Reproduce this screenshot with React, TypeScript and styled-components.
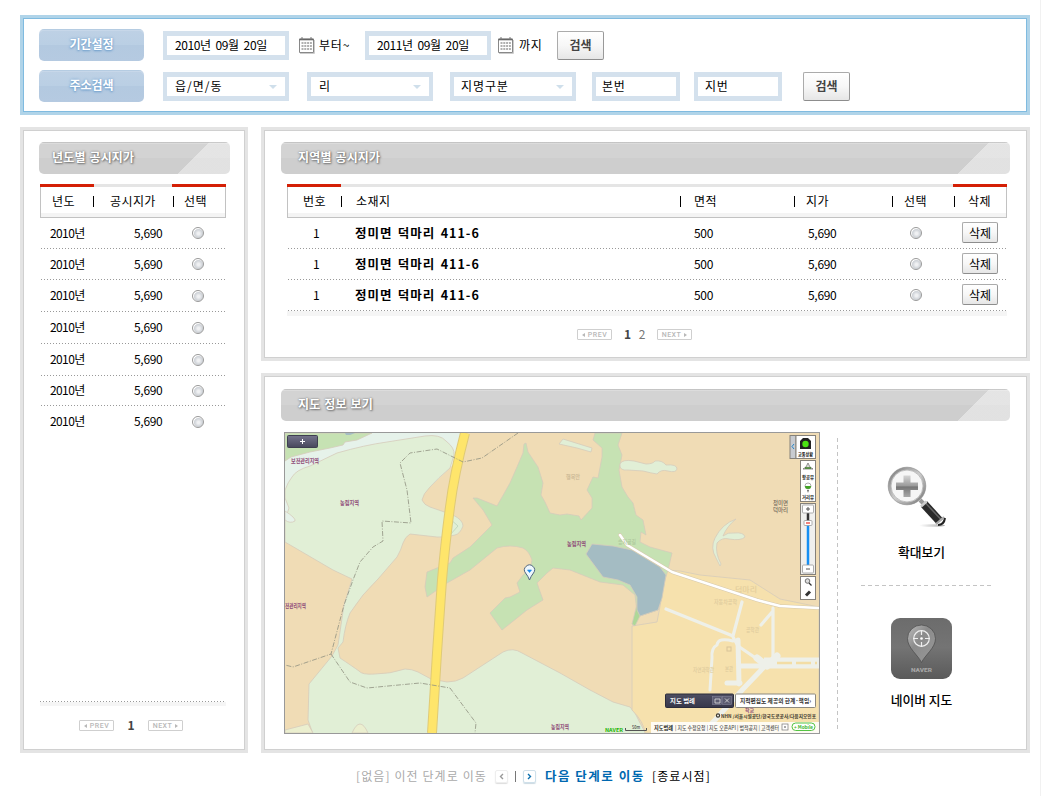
import React from 'react';
import styled, { createGlobalStyle, css } from 'styled-components';

const Global = createGlobalStyle`
  * { box-sizing: border-box; }
  html, body { margin: 0; padding: 0; background: #fff; overflow: hidden; }
  body { font: 12px/16px "Noto Sans CJK KR", sans-serif; color: #000; }
  button, input { font: inherit; color: inherit; }
`;

const Page = styled.main`
  width: 1041px;
  height: 796px;
  padding: 15px 10px 0 20px;
  border-right: 1px solid #f1f1f1;
  display: flex;
  flex-direction: column;
`;

const Text = styled.span<{ $ls?: number; $ws?: number; $bold?: boolean; $size?: number; $color?: string }>`
  white-space: nowrap;
  line-height: 16px;
  letter-spacing: ${p => p.$ls ?? 0}px;
  word-spacing: ${p => p.$ws ?? 0}px;
  font-weight: ${p => (p.$bold ? 700 : 400)};
  font-size: ${p => p.$size ?? 12}px;
  color: ${p => p.$color ?? '#000'};
`;

const SearchPanel = styled.section`
  width: 1010px;
  height: 100px;
  border: 3px solid #b0d4e9;
  box-shadow: inset 0 0 0 1px #80bbe0;
  padding: 11px 16px;
  display: flex;
  flex-direction: column;
  gap: 9px;
`;

const SearchRow = styled.div`
  display: flex;
  align-items: center;
  height: 32px;
`;

const SearchTag = styled.div`
  width: 105px;
  height: 32px;
  margin-right: 19px;
  border-radius: 5px;
  background: linear-gradient(#a9c4dd 0 1px, #bed1e5 1px, #bacfe4 50%, #b3c9e0 51%, #b5cae1);
  box-shadow: inset 0 2px 0 rgba(255, 255, 255, 0.15);
  color: #fff;
  font-weight: 700;
  line-height: 30px;
  text-align: center;
  text-shadow: 0 0 3px #6f9fcc, 0 1px 2px #6f9fcc;
`;

const Field = styled.div<{ $w?: number; $gap?: number; $pad?: number }>`
  width: ${p => p.$w ?? 126}px;
  height: 29px;
  margin-right: ${p => p.$gap ?? 0}px;
  padding: 0 8px 0 ${p => p.$pad ?? 8}px;
  border: solid #d4e1ed;
  border-width: 5px 4px;
  display: flex;
  align-items: center;
  justify-content: space-between;
`;

const SelectArrow = styled.i`
  border: 4px solid transparent;
  border-top-color: #cfdfeb;
  border-bottom: 0;
  margin-top: 1px;
`;

const buttonFace = css`
  border: 1px solid #ababab;
  border-bottom-color: #8d8d8d;
  border-right-color: #999;
  border-radius: 2px;
  background: linear-gradient(#fff, #f7f7f7 50%, #e6e6e6);
  padding: 0;
`;

const SearchButton = styled.button`
  ${buttonFace}
  width: 47px;
  height: 29px;
  color: #444;
  font-weight: 700;
  line-height: 26px;
`;

const DeleteButton = styled.button`
  ${buttonFace}
  width: 36px;
  height: 21px;
  margin-bottom: 1px;
  line-height: 17px;
`;

const Columns = styled.div`
  display: flex;
  gap: 13px;
  margin-top: 12px;
  height: 626px;
`;

const Stack = styled.div`
  display: flex;
  flex-direction: column;
  gap: 12px;
`;

const Panel = styled.section<{ $w: number; $h: number; $pad: string }>`
  width: ${p => p.$w}px;
  height: ${p => p.$h}px;
  padding: ${p => p.$pad};
  border: 3px solid #e4e4e4;
  box-shadow: inset 0 0 0 1px #d0d0d0;
  display: flex;
  flex-direction: column;
`;

const TitleBar = styled.h2<{ $w: number; $pad: number }>`
  flex: none;
  width: ${p => p.$w}px;
  height: 32px;
  margin: 0;
  padding-left: ${p => p.$pad}px;
  border-radius: 5px;
  background:
    linear-gradient(rgba(190, 190, 190, 0.7) 0 1px, rgba(255, 255, 255, 0.2) 1px 2px, transparent 2px),
    linear-gradient(135deg, transparent 0 50%, rgba(255, 255, 255, 0.4) 50.5%) right 21px top / 32px 32px no-repeat,
    linear-gradient(rgba(255, 255, 255, 0.4), rgba(255, 255, 255, 0.4)) right top / 21px 32px no-repeat,
    linear-gradient(#d3d3d3 0 50%, #cecece 50%);
  color: #fff;
  font-size: 12px;
  font-weight: 700;
  line-height: 30px;
  letter-spacing: 0.15px;
  word-spacing: 1px;
  text-shadow: 0 0 2px #666, 1px 1px 2px #777;
`;

const TableHead = styled.div<{ $cols: string }>`
  flex: none;
  display: grid;
  grid-template-columns: ${p => p.$cols};
  align-items: center;
  height: 34px;
  background:
    linear-gradient(#d41f05, #d41f05) left top / 54px 3px no-repeat,
    linear-gradient(#d41f05, #d41f05) right top / 54px 3px no-repeat,
    linear-gradient(#e5e5e5, #e5e5e5) top / 100% 3px no-repeat,
    linear-gradient(#c2c2c2, #c2c2c2) bottom / 100% 1px no-repeat,
    linear-gradient(#c2c2c2, #c2c2c2) left / 1px 100% no-repeat,
    linear-gradient(#c2c2c2, #c2c2c2) right / 1px 100% no-repeat,
    linear-gradient(#f4f4f4, #f4f4f4) left bottom 1px / 100% 4px no-repeat;
`;

const HeadCell = styled.div<{ $pad: number; $sep?: boolean }>`
  display: flex;
  align-items: center;
  gap: ${p => p.$pad}px;
  padding-left: ${p => (p.$sep ? 0 : p.$pad)}px;
  white-space: nowrap;
  letter-spacing: 0.4px;
  ${p => p.$sep && css`
    &::before { content: ''; width: 1px; height: 11px; background: #000; }
  `}
`;

const dots = 'repeating-linear-gradient(90deg, #999 0 1px, transparent 1px 3px)';

const Row = styled.div<{ $cols: string; $h: number; $last?: boolean }>`
  flex: none;
  display: grid;
  grid-template-columns: ${p => p.$cols};
  align-items: center;
  height: ${p => p.$h}px;
  padding-bottom: 1px;
  background: ${p => (p.$last ? 'none' : `${dots} left 1px bottom / calc(100% - 2px) 1px no-repeat`)};
`;

const Cell = styled.div<{ $pad?: number; $lift?: boolean }>`
  display: flex;
  align-items: center;
  padding-left: ${p => p.$pad ?? 0}px;
  padding-bottom: ${p => (p.$lift ? 1 : 0)}px;
`;

const Radio = styled.i`
  width: 12px;
  height: 12px;
  border: 1px solid #999;
  border-radius: 50%;
  background: radial-gradient(circle at 55% 55%, #f0f1f3 0 15%, #cfd3d8 50%, #d6d9dd 56%, #fff 62%);
`;

const TableFoot = styled.div`
  flex: none;
  height: 5px;
  background: #f5f5f5;
`;

const DottedFoot = styled(TableFoot)`
  background: ${dots} top / 100% 1px no-repeat, linear-gradient(#fff 0 1px, #f5f5f5 1px);
`;

const Pager = styled.nav<{ $pad: number }>`
  display: flex;
  align-items: center;
  height: 11px;
  padding-left: ${p => p.$pad}px;
`;

const PageStep = styled.button`
  width: 35px;
  height: 11px;
  padding: 1px 0 0;
  border: 1px solid #cfcfcf;
  border-radius: 1px;
  background: #fff;
  display: flex;
  align-items: center;
  justify-content: center;
  gap: 3px;
  color: #b8b8b8;
  font: 500 7px/8px Roboto, sans-serif;
  letter-spacing: 0.5px;
`;

const StepArrow = styled.i<{ $right?: boolean }>`
  margin-bottom: 1px;
  border: 2.5px solid transparent;
  ${p => (p.$right
    ? 'border-left: 3px solid #b8b8b8; border-right: 0;'
    : 'border-right: 3px solid #b8b8b8; border-left: 0;')}
`;

const PageNumber = styled.span<{ $current?: boolean; $w: number }>`
  width: ${p => p.$w}px;
  padding-bottom: 2px;
  text-align: center;
  line-height: 11px;
  font-weight: ${p => (p.$current ? 700 : 400)};
  color: ${p => (p.$current ? '#444' : '#777')};
`;

const MapBody = styled.div`
  display: flex;
  margin: 11px 0 0 3px;
`;

const MapSvg = styled.svg`
  display: block;
  width: 536px;
  height: 302px;
  text { font-family: "Noto Sans CJK KR", sans-serif; }
`;

const Tools = styled.aside`
  width: 154px;
  height: 293px;
  margin: 6px 0 0 17px;
  padding-left: 24px;
  background: repeating-linear-gradient(#c4c4c4 0 4px, transparent 4px 7px) left top / 1px 100% no-repeat;
  display: flex;
  flex-direction: column;
`;

const ToolButton = styled.button<{ $top: number; $gap: number }>`
  width: 121px;
  padding: ${p => p.$top}px 0 0;
  border: 0;
  background: none;
  display: flex;
  flex-direction: column;
  align-items: center;
  gap: ${p => p.$gap}px;
  font-size: 12.8px;
  font-weight: 500;
  line-height: 18px;
`;

const ToolDivider = styled.div`
  flex: none;
  width: 130px;
  height: 1px;
  background: repeating-linear-gradient(90deg, #c4c4c4 0 4px, transparent 4px 7px);
`;

const Footer = styled.footer`
  display: flex;
  align-items: center;
  height: 18px;
  margin: 14px 0 0 336px;
`;

const StepIcon = styled.span<{ $active?: boolean }>`
  width: 13px;
  height: 13px;
  border: 1px solid ${p => (p.$active ? '#cfe0ea' : '#eee')};
  border-radius: 2px;
  box-shadow: 0 1px 1px ${p => (p.$active ? '#cbd9e1' : '#ddd')};
  display: flex;
  align-items: center;
  justify-content: center;
`;

const FooterBar = styled.i`
  width: 1px;
  height: 11px;
  margin: 0 7px 0 7px;
  background: #777;
`;

const Calendar = () => (
  <svg width="16" height="17" viewBox="0 0 16 17" style={{ flex: 'none' }}>
    <path d="M.5 2h14v13.500H.5z" fill="#fff" stroke="#888" />
    <path d="M15.500 3v13.500H1" fill="none" stroke="#ccc" />
    <path d="M.5 2.500h14" stroke="#666" strokeWidth="1.600" />
    <path d="M3 0v3M12 0v3" stroke="#777" />
    {[5, 8, 11].map(y => (
      <path key={y} d={`M2.500 ${y + 1}h10.500`} stroke="#b0b0b0" strokeWidth="2" strokeDasharray="2 0.8" />
    ))}
  </svg>
);

const Chevron = ({ right, color }: { right?: boolean; color: string }) => (
  <svg width="5" height="7" viewBox="0 0 5 7">
    <path d={right ? 'M1 1l2.5 2.5L1 6' : 'M4 1L1.5 3.5 4 6'} fill="none" stroke={color} strokeWidth="1.4" />
  </svg>
);

const MagnifierSvg = styled.svg`
  width: 62px;
  height: 62px;
  margin-right: 7px;
`;

const Magnifier = () => (
  <MagnifierSvg viewBox="0 0 62 62">
    <defs>
      <linearGradient id="rim" x2="1" y2="1">
        <stop offset="0" stopColor="#777" /><stop offset=".5" stopColor="#ccc" /><stop offset="1" stopColor="#777" />
      </linearGradient>
      <linearGradient id="cross" x2="0" y2="1">
        <stop offset="0" stopColor="#d5d5d5" /><stop offset=".5" stopColor="#999" />
        <stop offset=".52" stopColor="#757575" /><stop offset="1" stopColor="#a8a8a8" />
      </linearGradient>
      <linearGradient id="shade"><stop offset="0" stopColor="#fff" /><stop offset="1" stopColor="#aaa" /></linearGradient>
    </defs>
    <ellipse cx="45" cy="59.500" rx="13" ry="1.300" fill="url(#shade)" />
    <path d="M33 34l5 5" stroke="#999" strokeWidth="4" />
    <path d="M37 38L53 55.500" stroke="#2a2a2a" strokeWidth="8.500" />
    <path d="M38.500 37L54.500 54" stroke="#666" strokeWidth="1.500" />
    <path d="M34 40.500l5.500-5" stroke="#ccc" strokeWidth="2.500" />
    <path d="M49 58l8-7" stroke="#aaa" strokeWidth="2" />
    <path d="M51 59q6 0 7-7" fill="none" stroke="#222" strokeWidth="2" />
    <circle cx="20" cy="20" r="17.500" fill="#f6f6f6" stroke="url(#rim)" strokeWidth="2.600" />
    <circle cx="20" cy="20" r="18.800" fill="none" stroke="#888" strokeWidth=".6" />
    <circle cx="20" cy="20" r="16" fill="none" stroke="#999" strokeWidth=".6" />
    <path d="M16.500 9.500h7v7H31v7.500h-7.500v7h-7v-7H9v-7.500h7.500z" fill="url(#cross)" />
  </MagnifierSvg>
);

const NaverIcon = () => (
  <svg width="61" height="61" viewBox="0 0 61 61">
    <defs>
      <linearGradient id="tile" x2="0" y2="1">
        <stop offset="0" stopColor="#6c6c6c" /><stop offset=".48" stopColor="#747474" /><stop offset="1" stopColor="#5a5a5a" />
      </linearGradient>
      <linearGradient id="drop" x2="1" y2="1">
        <stop offset="0" stopColor="#bdbdbd" /><stop offset=".4" stopColor="#8b8b8b" /><stop offset="1" stopColor="#999" />
      </linearGradient>
    </defs>
    <rect width="61" height="61" rx="9" fill="url(#tile)" />
    <path d="M30.500 44.500C27 37 16.500 30 16.500 20.500a14 13.500 0 0 1 28 0C44.500 30 34 37 30.500 44.500z" fill="url(#drop)" stroke="#4f4f4f" strokeWidth=".8" />
    <circle cx="30.500" cy="20.500" r="7.800" fill="none" stroke="#eee" strokeWidth="1.200" />
    <circle cx="30.500" cy="20.500" r="1.300" fill="#fff" />
    <path d="M30.500 12v5M30.500 24v5M22 20.500h5M34 20.500h5" stroke="#eee" strokeWidth="1.200" />
    <text x="20" y="54" fontSize="5.500" fontWeight="900" fontFamily="Roboto, sans-serif" fill="#a5a5a5" textLength="21" lengthAdjust="spacingAndGlyphs">NAVER</text>
  </svg>
);

type LabelProps = { x: number; y: number; w: number; s?: number; c?: string; b?: boolean; children: string };
const MapLabel = ({ x, y, w, s = 6, c = '#8e4a78', b, children }: LabelProps) => (
  <text x={x} y={y} fontSize={s} fill={c} fontWeight={b ? 700 : 500} textLength={w} lengthAdjust="spacingAndGlyphs">{children}</text>
);

const MapView = () => (
  <MapSvg viewBox="284 432 536 302">
    <defs>
      <linearGradient id="dark" x2="0" y2="1">
        <stop offset="0" stopColor="#74748c" /><stop offset="1" stopColor="#48485c" />
      </linearGradient>
      <linearGradient id="legend" x2="0" y2="1">
        <stop offset="0" stopColor="#4e4e62" /><stop offset="1" stopColor="#37374a" />
      </linearGradient>
    </defs>
    <rect x="284" y="432" width="536" height="302" fill="#f0dcb5" />
    <g stroke="#d6cbbb" strokeWidth=".8" strokeLinejoin="round">
      <path d="M285 433H461L455 463 430 487 340 500 285 542z" fill="#e6f2ea" stroke="none" />
      <path d="M285 433H372L357 440 345 442 343 445 330 448 310 452 291 457 285 461z" fill="#c6e2b3" />
      <path d="M345 433h10l-5 2h-4z" fill="#a4bcc3" stroke="none" />
      <path d="M285 490Q288 482 292 477 296 470 310 466L337 453Q365 445 387 442L425 436Q440 434 446 441 455 448 454 455L450 468Q438 478 430 487 423 494 422 500 424 505 430 507L453 515Q463 520 463 526 460 534 455 535 446 538 437 537L410 534Q405 537 403 543 401 550 397 557L378 579Q362 594 350 613 345 625 343 642L338 648 340 658Q352 666 359 671 362 675 375 674 390 674 405 669 412 669 418 672L431 679 447 682Q456 682 463 678L483 665 503 652Q513 647 522 653L560 673 590 690 613 702 630 707Q636 713 639 721L646 734H313L308 720 309 684 332 656 338 645 344 605 352 579 333 570 285 542V520L289 508 285 498z" fill="#e1efd6" />
      <path d="M285 511Q296 518 295 521 290 524 285 520z" fill="#e6f2ea" />
      <path d="M449 518l9 8-8 9" fill="none" stroke="#b9d3b9" />
      <path d="M526 443L528 452 538 467 543 483 541 495 545 502 550 513 560 515 567 514 579 516 581 520 592 508 592 498 587 490 593 477 598 478 602 457 602 448 593 440 595 433H622L618 445 622 455 619 470 622 487 628 497 633 503 636 515 643 520 646 535 641 532 640 542 650 547 672 553 668 570 671 580 665 585 661 600 638 617 634 626 632 624 637 612 635 595 623 585 600 582 570 570 553 568 547 573 537 583 543 600 527 610 502 630 490 613 505 598 510 597 520 592 517 583 523 575 530 570 532 560Q529 551 523 548 510 544 497 548L470 570 447 583 427 597 425 587 427 572 437 568 450 563 453 558 470 547 492 525 483 510 473 498 477 498 497 506 510 483 517 467 523 453 524 444z" fill="#c6e2b3" />
      <path d="M632 626L657 622 665 580 668 570 680 571 700 575 750 580 780 599 819 607V733H645Q644 722 632 710z" fill="#f6e1ad" />
      <path d="M637 604L632 624 635 626 640 616 658 610 662 595z" fill="#aed898" />
      <path d="M586 554L592 544 613 546 632 550 660 567 666 575 662 598 658 610 640 616 637 610 637 597 630 585 618 580 603 577z" fill="#a4bcc3" />
      <path d="M559 444L563 439 592 448 591 452 577 448z" fill="#e1efd6" />
      <path d="M620 464Q622 459 634 461L646 464Q653 464 655 461 662 460 666 465 677 464 677 469 676 473 668 471 661 469 657 474 651 473 643 471L628 470Q619 471 620 464z" fill="#e1efd6" />
      <path d="M736 519Q722 524 715 538 710 548 716 558L720 566 721 564Q715 553 717 543 722 537 729 539 741 541 745 537 744 532 734 533 728 532 723 536 727 526 736 519z" fill="#e1efd6" />
      <path d="M285 730L308 724 313 733H285z M352 733Q360 715 368 733z" fill="#ebefcf" />
    </g>
    <g fill="none" stroke="#d6c9ad" strokeLinejoin="round" strokeLinecap="round">
      <path d="M620 535L627 545 672 572 757 600 780 606 818 608" strokeWidth="3.600" />
      <path d="M620 535L627 545 672 572 757 600 780 606 818 608" stroke="#fff" strokeWidth="2.600" />
    </g>
    <g fill="none" stroke="#eef0e9" strokeLinejoin="round" strokeLinecap="round">
      <path d="M666 609L733 636M742 602L733 636M733 637L738 646 763 663M773 608V660M773 611L761 625" strokeWidth="3.200" />
      <path d="M733 641Q718 637 717 645 711 648 712 658L710 690" strokeWidth="3" />
      <path d="M738 640L739 684M739 666H765M727 683H740M765 666L744 688 704 732" strokeWidth="5" />
      <path d="M764 663H819" strokeWidth="11" strokeLinecap="butt" />
      <path d="M757 658l10 8 10-10" strokeWidth="7" />
    </g>
    <path d="M777 663h40" stroke="#f3dda5" strokeWidth="2.500" strokeDasharray="15 4" />
    <path d="M465 433Q454 475 450 507 445 545 442 580L437 653 432 733" fill="none" stroke="#dfca77" strokeWidth="10" />
    <path d="M465 433Q454 475 450 507 445 545 442 580L437 653 432 733" fill="none" stroke="#fee56b" strokeWidth="8" />
    <path d="M518 433L482 458 463 462 437 449 410 453 400 463 407 490 411 523 382 521 383 541 373 547 360 562 353 580 344 605 331 654 293 667 285 665M331 654L350 682 367 688 420 683 450 688 476 723 475 733" fill="none" stroke="#8f9080" strokeWidth=".8" strokeDasharray="5 1.500 1 1.500" />
    <MapLabel x={291} y={463} w={28} b>보전관리지역</MapLabel>
    <MapLabel x={340} y={505} w={19} b>농림지역</MapLabel>
    <MapLabel x={285} y={608} w={21} b>전관리지역</MapLabel>
    <MapLabel x={567} y={545.5} w={19} b>농림지역</MapLabel>
    <MapLabel x={551} y={728.5} w={18} b>농림지역</MapLabel>
    <MapLabel x={566} y={479} w={14} c="#c8b593">행목안</MapLabel>
    <MapLabel x={618} y={544} w={18} c="#adc79b">승지골길</MapLabel>
    <MapLabel x={773} y={505} w={15} c="#70675a">정미면</MapLabel>
    <MapLabel x={773} y={512} w={15} c="#70675a">덕마리</MapLabel>
    <MapLabel x={735} y={592} w={22} s={7} c="#e3cd9c">덕마리</MapLabel>
    <MapLabel x={714} y={604} w={23} c="#decb9d">자동차공학</MapLabel>
    <MapLabel x={746} y={632} w={13} c="#decb9d">공학관</MapLabel>
    <MapLabel x={693} y={672} w={21} c="#decb9d">자연과학관</MapLabel>
    <MapLabel x={725} y={671} w={8} c="#decb9d">본관</MapLabel>
    <rect x="727" y="647" width="4" height="4" fill="none" stroke="#d8c49a" />
    <path d="M529.500 580Q528 576 525.500 573a5 5 0 1 1 8 0Q531 576 529.500 580z" fill="#eef7fd" stroke="#4f6680" />
    <path d="M527.500 570h4l-2 2.500z" fill="#1687e8" stroke="#1687e8" strokeWidth=".6" />

    <rect x="287.500" y="435.500" width="30" height="12" rx="1" fill="url(#dark)" stroke="#3f3f50" />
    <path d="M300 441.500h5M302.500 439v5" stroke="#fff" />

    <g fill="#fff" stroke="#85817a">
      <rect x="790" y="435.500" width="6" height="23" fill="#c8cbd0" />
      <rect x="796" y="435.500" width="19.500" height="23" />
      <rect x="800.500" y="460.500" width="15" height="41" />
      <rect x="800.500" y="503.500" width="15" height="71" fill="#f0f0ee" />
      <rect x="800.500" y="576.500" width="15" height="23" />
    </g>
    <path d="M794 444l-2 2.500 2 2.500" fill="none" stroke="#2586c9" />
    <path d="M800 449v-8l3-3h5l3 3v8z" fill="#222" />
    <circle cx="805.500" cy="444" r="3.200" fill="#4be413" />
    <MapLabel x={798} y={456} w={15} s={5} c="#111" b>교통상황</MapLabel>
    <path d="M808 463l2 4 3 2h-10l3-2z" fill="#ddd" stroke="#555" strokeWidth=".6" />
    <path d="M805 468h6" stroke="#397d22" strokeWidth="1.500" />
    <MapLabel x={802} y={478.5} w={12} s={5} c="#222" b>항공뷰</MapLabel>
    <circle cx="808" cy="486" r="3" fill="#fff" stroke="#777" strokeWidth=".6" />
    <path d="M805 486h6q0 3-3 3t-3-3z" fill="#42a324" />
    <path d="M807 490h2l-1 3z" fill="#666" />
    <MapLabel x={802} y={498.5} w={12} s={5} c="#222" b>거리뷰</MapLabel>
    <path d="M808 513v10" stroke="#333" strokeWidth="2.500" />
    <path d="M808 524v42" stroke="#168ff3" strokeWidth="2.500" />
    <g fill="#fff" stroke="#999" strokeWidth=".8">
      <rect x="802.500" y="505" width="11" height="8" rx="1" />
      <rect x="804" y="520.500" width="8" height="5" rx="1" />
      <rect x="802.500" y="565" width="11" height="8" rx="1" />
    </g>
    <path d="M806 509h4M808 507v4M806 569h4" stroke="#555" />
    <path d="M806 523h4" stroke="#ee5a50" strokeWidth="1.500" />
    <circle cx="807.500" cy="581" r="2.300" fill="#ddd" stroke="#555" strokeWidth=".8" />
    <path d="M809 583l2.500 2.500" stroke="#333" strokeWidth="1.200" />
    <path d="M806 595.500l4-4" stroke="#333" strokeWidth="3" />

    <rect x="665.500" y="694" width="68" height="13.500" rx="1" fill="url(#legend)" stroke="#2c2c3b" />
    <MapLabel x={670} y={703} w={25} c="#fff" b>지도 범례</MapLabel>
    <g fill="#5c5c71" stroke="#84849a" strokeWidth=".6">
      <rect x="712.500" y="696.500" width="9" height="8" /><rect x="722.500" y="696.500" width="9" height="8" />
    </g>
    <path d="M715 699h5v4h-5zM725 698.500l4 4m0-4l-4 4" fill="none" stroke="#ddd" strokeWidth=".8" />
    <rect x="735.500" y="694" width="80" height="13.500" rx="1" fill="#fff" stroke="#8c8980" />
    <MapLabel x={740} y={703} w={71} c="#333" b>지적편집도 제공의 한계·책임›</MapLabel>
    <MapLabel x={745} y={712} w={9} s={4.5} b>학교</MapLabel>
    <rect x="651" y="722" width="168" height="11" fill="#fff" opacity=".85" />
    <circle cx="718" cy="715.500" r="1.600" fill="none" stroke="#3d392f" strokeWidth="1.200" />
    <MapLabel x={721} y={717.8} w={95} s={4.7} c="#3d392f" b>NHN /서울시설공단/한국도로공사/다음지오인포</MapLabel>
    <MapLabel x={654} y={729.5} w={19} s={5.5} c="#222" b>지도범례</MapLabel>
    <MapLabel x={675} y={729.5} w={104} s={5.5} c="#555">| 지도 수정요청 | 지도 오픈API | 법적공지 | 고객센터</MapLabel>
    <rect x="782" y="724" width="6" height="6" fill="#fff" stroke="#777" strokeWidth=".7" />
    <path d="M784 727h2" stroke="#555" />
    <rect x="792" y="723" width="23" height="7.500" rx="3.700" fill="#fff" stroke="#55c443" />
    <MapLabel x={794} y={728.7} w={19} s={5} c="#3bb52a" b>+ Mobile</MapLabel>
    <MapLabel x={605} y={731.5} w={18} s={5} c="#19b400" b>NAVER</MapLabel>
    <MapLabel x={632} y={729} w={8} s={4.5} c="#444">50m</MapLabel>
    <path d="M625.500 728v2.500h21V728" fill="none" stroke="#555" />
    <rect x="284.500" y="432.500" width="535" height="301" fill="none" stroke="#999" />
  </MapSvg>
);

const StepPrev = () => <PageStep><StepArrow />PREV</PageStep>;
const StepNext = () => <PageStep>NEXT<StepArrow $right /></PageStep>;

const leftHeadCols = '53px 80px 53px';
const leftCols = '94px 57px 35px';
const rightHeadCols = '54px 339px 114px 98px 62px 53px';
const rightCols = '68px 339px 114px 102px 52px 45px';
const yearRowHeights = [31, 31, 32, 32, 32, 30, 32];

export default function App() {
  return (
    <>
      <Global />
      <Page>
        <SearchPanel>
          <SearchRow>
            <SearchTag>기간설정</SearchTag>
            <Field $gap={10}><Text $ls={-0.4} $ws={2.6}>2010년 09월 20일</Text></Field>
            <Calendar />
            <Text $ls={0.8} style={{ width: 46, marginLeft: 4 }}>부터~</Text>
            <Field $gap={7}><Text $ls={-0.4} $ws={2.6}>2011년 09월 20일</Text></Field>
            <Calendar />
            <Text $ls={0.8} style={{ width: 38, marginLeft: 5 }}>까지</Text>
            <SearchButton>검색</SearchButton>
          </SearchRow>
          <SearchRow>
            <SearchTag>주소검색</SearchTag>
            <Field $gap={18}><Text $ls={1}>읍/면/동</Text><SelectArrow /></Field>
            <Field $gap={17}><Text>리</Text><SelectArrow /></Field>
            <Field $gap={16} $pad={7}><Text $ls={0.9}>지명구분</Text><SelectArrow /></Field>
            <Field $w={88} $gap={14} $pad={6}><Text $ls={0.6}>본번</Text></Field>
            <Field $w={88} $gap={21} $pad={7}><Text $ls={0.6}>지번</Text></Field>
            <SearchButton>검색</SearchButton>
          </SearchRow>
        </SearchPanel>

        <Columns>
          <Panel $w={228} $h={626} $pad="12px 15px 0 16px">
            <TitleBar $w={191} $pad={13}>년도별 공시지가</TitleBar>
            <div style={{ width: 186, margin: '10px 0 0 1px' }}>
              <TableHead $cols={leftHeadCols}>
                <HeadCell $pad={12}>년도</HeadCell>
                <HeadCell $pad={16} $sep>공시지가</HeadCell>
                <HeadCell $pad={10} $sep>선택</HeadCell>
              </TableHead>
              {yearRowHeights.map((h, i) => (
                <Row key={i} $cols={leftCols} $h={h} $last={i === yearRowHeights.length - 1}>
                  <Cell $pad={10} $lift><Text $ls={-0.6}>2010년</Text></Cell>
                  <Cell $lift><Text $ls={-0.3}>5,690</Text></Cell>
                  <Cell $pad={1}><Radio /></Cell>
                </Row>
              ))}
            </div>
            <DottedFoot style={{ width: 186, margin: '263px 0 14px 1px' }} />
            <Pager $pad={40}>
              <StepPrev />
              <PageNumber $current $w={34}>1</PageNumber>
              <StepNext />
            </Pager>
          </Panel>

          <Stack>
            <Panel $w={769} $h={234} $pad="12px 17px 0 17px">
              <TitleBar $w={729} $pad={17}>지역별 공시지가</TitleBar>
              <div style={{ width: 720, margin: '10px 0 13px 6px' }}>
                <TableHead $cols={rightHeadCols}>
                  <HeadCell $pad={16}>번호</HeadCell>
                  <HeadCell $pad={14} $sep>소재지</HeadCell>
                  <HeadCell $pad={13} $sep>면적</HeadCell>
                  <HeadCell $pad={11} $sep>지가</HeadCell>
                  <HeadCell $pad={11} $sep>선택</HeadCell>
                  <HeadCell $pad={13} $sep>삭제</HeadCell>
                </TableHead>
                {[0, 1, 2].map(i => (
                  <Row key={i} $cols={rightCols} $h={31}>
                    <Cell $pad={26}><Text>1</Text></Cell>
                    <Cell><Text $bold $size={12.5} $ls={1} $ws={1.5}>정미면 덕마리 411-6</Text></Cell>
                    <Cell><Text $ls={-0.3}>500</Text></Cell>
                    <Cell><Text $ls={-0.3}>5,690</Text></Cell>
                    <Cell><Radio /></Cell>
                    <Cell><DeleteButton>삭제</DeleteButton></Cell>
                  </Row>
                ))}
                <TableFoot />
              </div>
              <Pager $pad={296}>
                <StepPrev />
                <PageNumber $current $w={31}>1</PageNumber>
                <PageNumber $w={14} style={{ marginLeft: -8, marginRight: 8 }}>2</PageNumber>
                <StepNext />
              </Pager>
            </Panel>

            <Panel $w={769} $h={380} $pad="13px 17px 0 17px">
              <TitleBar $w={729} $pad={17}>지도 정보 보기</TitleBar>
              <MapBody>
                <MapView />
                <Tools>
                  <ToolButton $top={28} $gap={15}><Magnifier />확대보기</ToolButton>
                  <ToolDivider style={{ marginTop: 24 }} />
                  <ToolButton $top={32} $gap={12}><NaverIcon />네이버 지도</ToolButton>
                </Tools>
              </MapBody>
            </Panel>
          </Stack>
        </Columns>

        <Footer>
          <Text $ls={1.1} $color="#aaa" style={{ width: 139 }}>[없음] 이전 단계로 이동</Text>
          <StepIcon><Chevron color="#999" /></StepIcon>
          <FooterBar />
          <StepIcon $active><Chevron right color="#0a6fae" /></StepIcon>
          <Text $bold $size={12.5} $ls={1.5} $color="#0068b0" style={{ width: 107, marginLeft: 9 }}>다음 단계로 이동</Text>
          <Text $ls={1.1}>[종료시점]</Text>
        </Footer>
      </Page>
    </>
  );
}
